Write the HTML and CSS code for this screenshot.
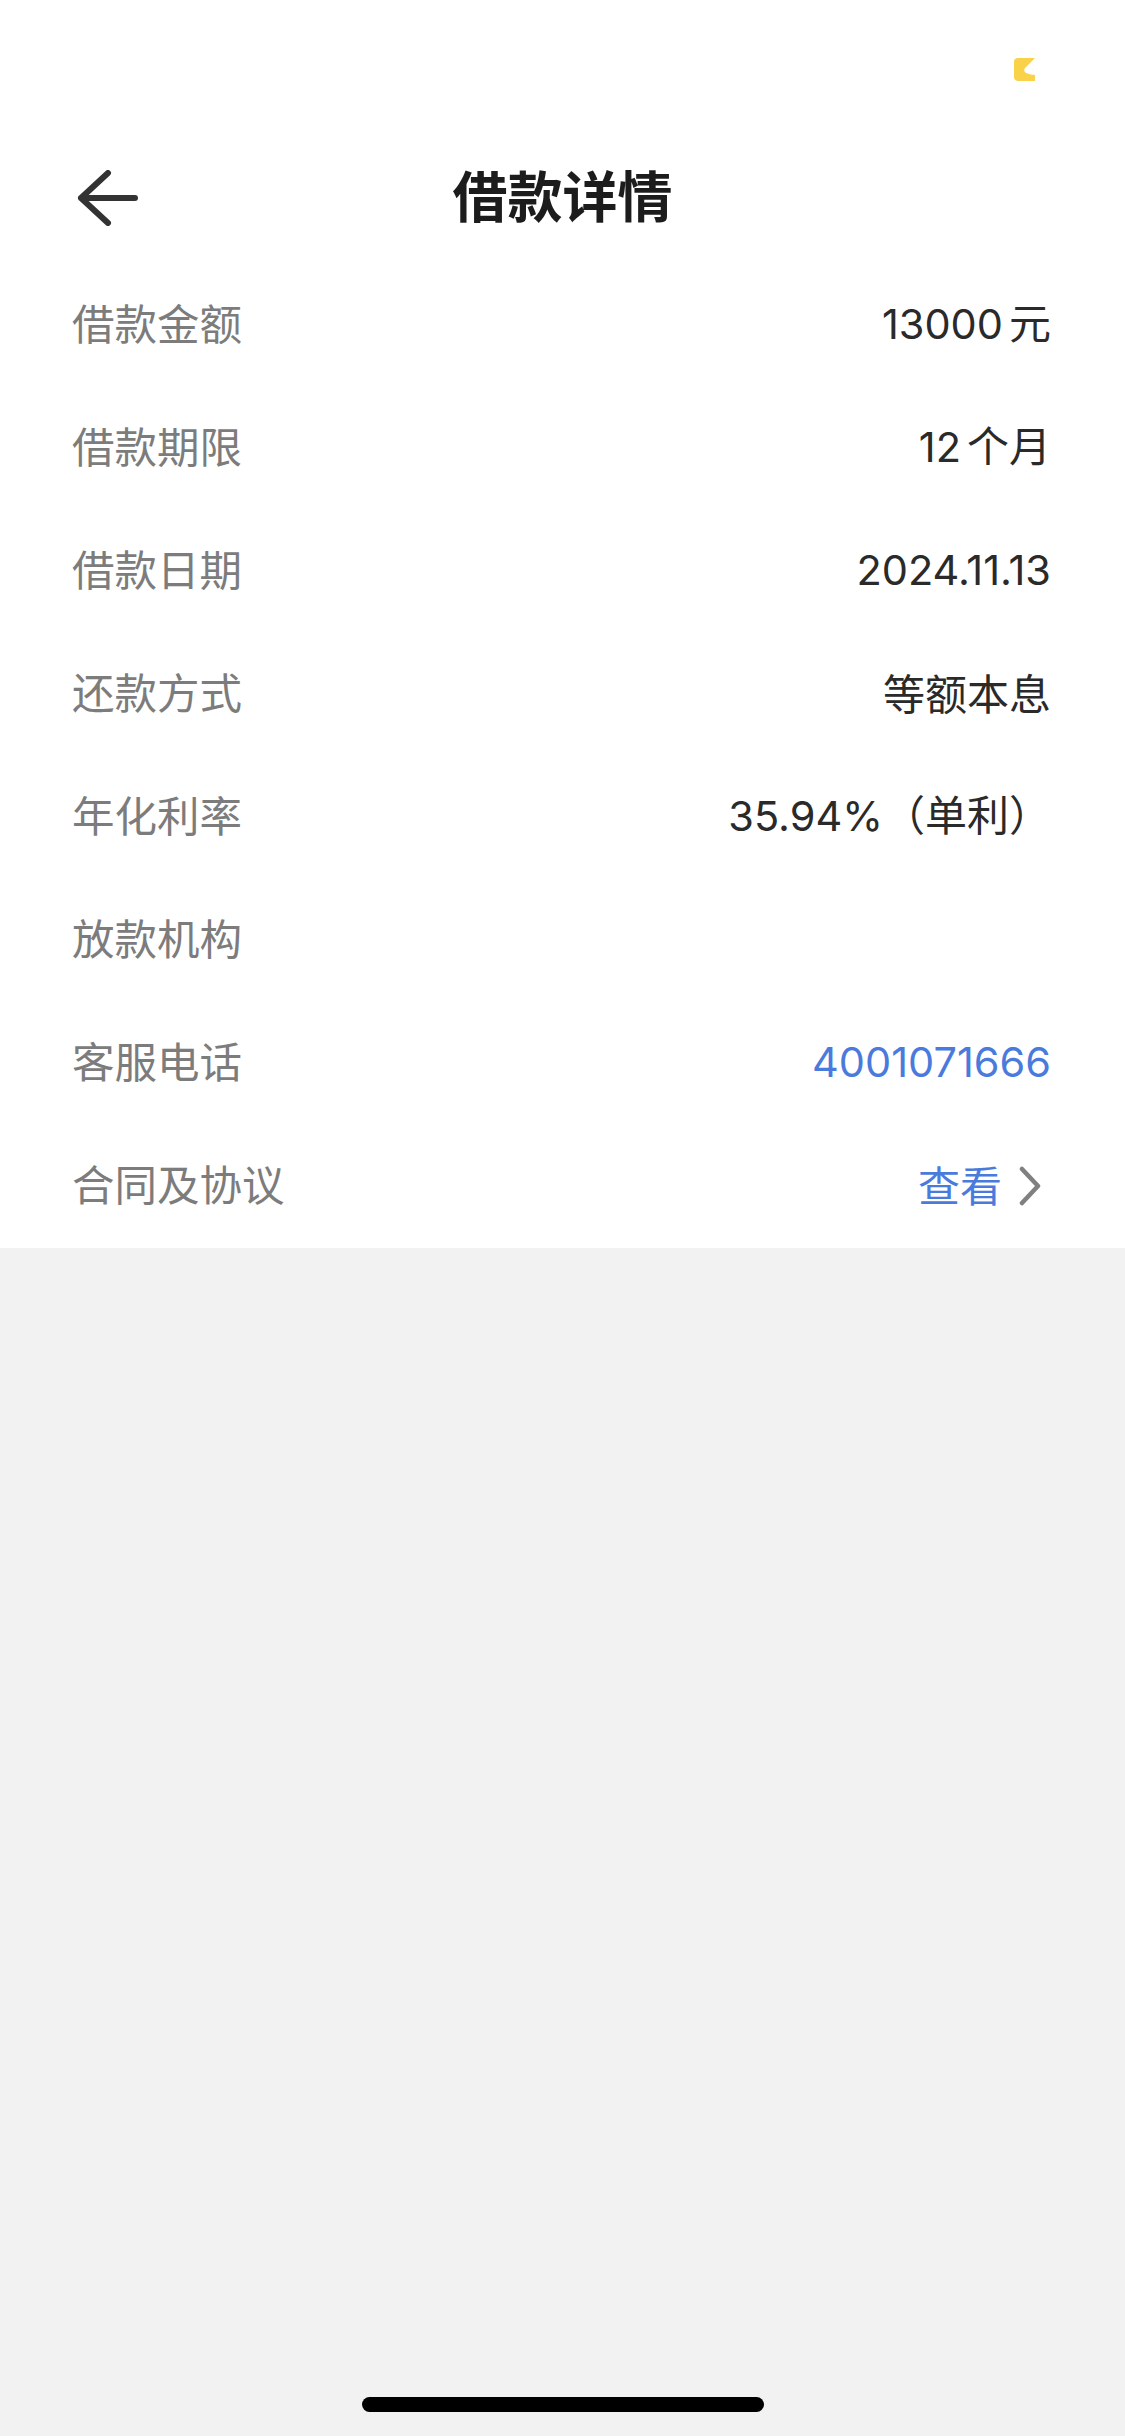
FILE: index.html

```html
<!DOCTYPE html>
<html lang="zh-CN">
<head>
  <meta charset="UTF-8">
  <meta name="viewport" content="width=device-width, initial-scale=1.0">
  <title>借款详情</title>
  <link rel="stylesheet" href="styles.css">
</head>
<body>
  <div class="panel">
    <div class="status-bar">
      <svg class="status-mark" width="22" height="24" viewBox="0 0 22 24">
        <path d="M4 0H21L11 10Q9 13 12 15Q17 17 21 17V23H5Q0 23 0 19V4Q0 0 4 0Z" fill="#fad249"/>
      </svg>
    </div>
    <header class="nav">
      <svg class="back" width="64" height="56" viewBox="0 0 64 56">
        <path d="M32 3L5 28L32 53M5 28H59" fill="none" stroke="#333333" stroke-width="6" stroke-linecap="round" stroke-linejoin="round"/>
      </svg>
      <h1>借款详情</h1>
    </header>
    <div class="rows">
      <div class="row"><span class="label">借款金额</span><span class="value"><span class="num">13000</span><span class="unit">元</span></span></div>
      <div class="row"><span class="label">借款期限</span><span class="value"><span class="num">12</span><span class="unit">个月</span></span></div>
      <div class="row"><span class="label">借款日期</span><span class="value"><span class="num">2024.11.13</span></span></div>
      <div class="row"><span class="label">还款方式</span><span class="value">等额本息</span></div>
      <div class="row"><span class="label">年化利率</span><span class="value"><span class="num">35.94%</span>（单利）</span></div>
      <div class="row"><span class="label">放款机构</span><span class="value"></span></div>
      <div class="row"><span class="label">客服电话</span><span class="value link"><span class="num">4001071666</span></span></div>
      <div class="row">
        <span class="label">合同及协议</span>
        <span class="value link with-arrow">查看
          <svg class="chevron" width="48" height="40" viewBox="0 0 48 40">
            <path d="M20 3L36 20L20 37" fill="none" stroke="#808080" stroke-width="4.5" stroke-linecap="round" stroke-linejoin="round"/>
          </svg>
        </span>
      </div>
    </div>
  </div>
  <div class="rest">
    <div class="home-bar"></div>
  </div>
</body>
</html>
```

FILE: styles.css

```css
html, body { margin: 0; padding: 0; }
body { width: 1125px; height: 2436px; display: flex; flex-direction: column; background-color: #f2f2f2; font-family: "Noto Sans CJK SC", "Noto Sans", sans-serif; }
.panel { background: #ffffff; height: 1248px; }
.status-bar { height: 130px; padding: 58px 89px 0 0; box-sizing: border-box; display: flex; justify-content: flex-end; align-items: flex-start; }
.nav { height: 134px; box-sizing: border-box; padding-bottom: 8px; position: relative; display: flex; align-items: center; justify-content: center; }
.nav h1 { margin: 0; font-size: 55px; font-weight: 700; color: #1c1c1c; line-height: 1; }
.back { position: absolute; left: 76px; top: 40px; }
.rows { display: flex; flex-direction: column; }
.row { height: 123px; box-sizing: border-box; display: flex; justify-content: space-between; align-items: center; padding: 0 74px 8px 72px; font-size: 42px; line-height: 1.4; }
.label { color: #7c7c7c; font-size: 42.5px; }
.value { color: #2a2a2a; padding-top: 3px; }
.num { font-family: Inter, "Noto Sans", sans-serif; font-size: 41.5px; }
.unit { margin-left: 6px; }
.link { color: #4a7bdc; }
.with-arrow { display: flex; align-items: center; }
.chevron { margin-top: 5px; margin-right: 1px; }
.rest { flex: 1; display: flex; flex-direction: column; justify-content: flex-end; align-items: center; padding-bottom: 24px; }
.home-bar { width: 402px; height: 15px; border-radius: 8px; background: #000000; }
```
